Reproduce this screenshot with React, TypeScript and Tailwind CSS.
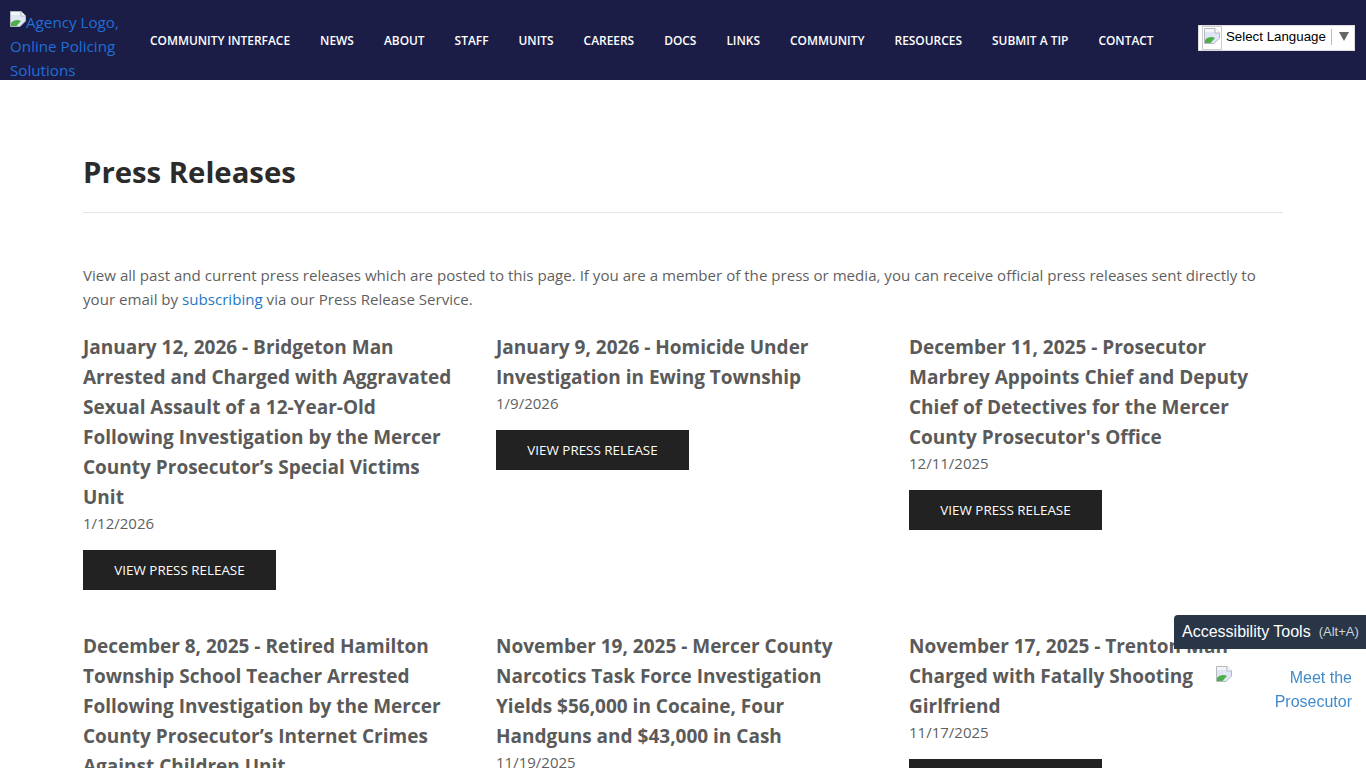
const navLinks = ['COMMUNITY INTERFACE', 'NEWS', 'ABOUT', 'STAFF', 'UNITS', 'CAREERS', 'DOCS', 'LINKS', 'COMMUNITY', 'RESOURCES', 'SUBMIT A TIP', 'CONTACT'];

const releases = [
    { title: 'January 12, 2026 - Bridgeton Man Arrested and Charged with Aggravated Sexual Assault of a 12-Year-Old Following Investigation by the Mercer County Prosecutor’s Special Victims Unit', date: '1/12/2026' },
    { title: 'January 9, 2026 - Homicide Under Investigation in Ewing Township', date: '1/9/2026' },
    { title: "December 11, 2025 - Prosecutor Marbrey Appoints Chief and Deputy Chief of Detectives for the Mercer County Prosecutor's Office", date: '12/11/2025' },
    { title: 'December 8, 2025 - Retired Hamilton Township School Teacher Arrested Following Investigation by the Mercer County Prosecutor’s Internet Crimes Against Children Unit', date: '12/8/2025' },
    { title: 'November 19, 2025 - Mercer County Narcotics Task Force Investigation Yields $56,000 in Cocaine, Four Handguns and $43,000 in Cash', date: '11/19/2025' },
    { title: 'November 17, 2025 - Trenton Man Charged with Fatally Shooting Girlfriend', date: '11/17/2025' },
];

function BrokenImage() {
    return (
        <svg width="16" height="16" viewBox="0 0 16 16" className="inline shrink-0 align-[-2px]">
            <path d="M0.5 0.5H11L15.5 5V10L10 15.5H0.5Z" fill="#dfe6f5" stroke="#b4b8bf" />
            <path d="M11 0.5V5H15.5" fill="#fff" stroke="#b4b8bf" />
            <path d="M1 15V12C4 8.5 8 8.5 11 10L6.5 15H1Z" fill="#4fae4a" />
            <path d="M1 1H10V4H1Z" fill="#f4f5f8" />
        </svg>
    );
}

export default function App() {
    return (
        <div className="h-screen overflow-hidden bg-white font-['Open_Sans',sans-serif] text-[#5f5f5f]">
            <header className="flex h-20 bg-[#1c1d46]">
                <a href="#" className="mt-[10px] ml-[10px] h-[70px] w-[130px] overflow-hidden text-[15.2px] leading-6 text-[#1f6fd6]">
                    <span className="relative -top-[3px]"><BrokenImage /></span>Agency Logo, Online Policing Solutions
                </a>
                <nav className="ml-[10px] flex items-center gap-[30px] pt-[2px]">
                    {navLinks.map(link => (
                        <a key={link} href="#" className="text-[11.93px] font-semibold whitespace-nowrap text-white">{link}</a>
                    ))}
                </nav>
                <div className="mt-[25px] mr-[11px] ml-auto flex h-[26px] w-[157px] items-center border border-[#ddd] bg-white pl-[3px] font-['Liberation_Sans',sans-serif] text-[13.3px] text-black">
                    <span className="border border-[#ccc] p-px"><BrokenImage /></span>
                    <span className="mb-[3px] ml-[4px] whitespace-nowrap">Select Language</span>
                    <span className="mb-[3px] ml-[5px] h-[16px] w-px bg-[#bbb]"></span>
                    <svg width="10" height="9" viewBox="0 0 10 9" className="mb-[3px] ml-[7px]"><path d="M0 0H10L5 9Z" fill="#666" /></svg>
                </div>
            </header>

            <main className="mx-auto w-[1200px] pt-[70px]">
                <h1 className="border-b border-[#e5e5e5] pb-[17px] text-[29.3px] leading-[45px] font-bold text-[#2b2b2b]">Press Releases</h1>
                <p className="mt-[50px] text-[15.1px] leading-6">
                    View all past and current press releases which are posted to this page. If you are a member of the press or media, you can receive official press releases sent directly to your email by <a href="#" className="text-[#1f77c4]">subscribing</a> via our Press Release Service.
                </p>
                <div className="mt-[21px] grid grid-cols-[373px_373px_373px] gap-x-10 gap-y-[41px]">
                    {releases.map(release => (
                        <article key={release.title}>
                            <h2 className="text-[19px] leading-[30px] font-bold text-[#5a5a5a]">{release.title}</h2>
                            <div className="-mt-px text-[15px] leading-6">{release.date}</div>
                            <a href="#" className="mt-[15px] flex h-10 w-[193px] items-center justify-center bg-[#222] text-[13.4px] text-white">VIEW PRESS RELEASE</a>
                        </article>
                    ))}
                </div>
            </main>

            <div className="fixed top-[666px] right-[14px] flex w-[136px] font-['Liberation_Sans',sans-serif] text-[16px] leading-6 text-[#428bca]">
                <span className="mt-[-3px]"><BrokenImage /></span>
                <a href="#" className="flex-1 text-right">Meet the Prosecutor</a>
            </div>
            <div className="fixed top-[615px] right-0 flex h-[34px] w-[192px] items-center gap-2 rounded-tl-[4px] bg-[#283648] pl-2 font-['Liberation_Sans',sans-serif] whitespace-nowrap text-white">
                <span className="text-[16px]">Accessibility Tools</span>
                <span className="text-[13px] text-[#cfd4da]">(Alt+A)</span>
            </div>
        </div>
    );
}
